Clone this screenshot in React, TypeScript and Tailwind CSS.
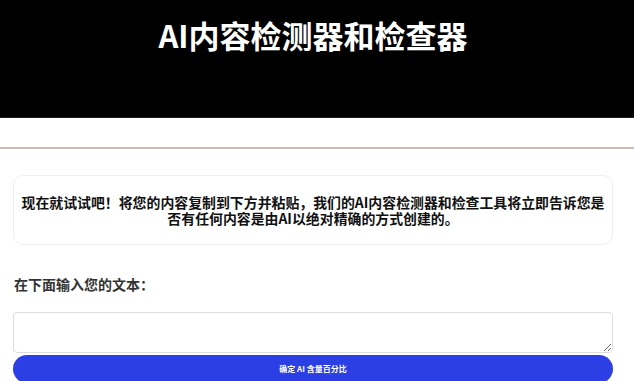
import React from "react";

export default function App() {
  return (
    <div
      className="w-[634px] h-[381px] overflow-hidden bg-white"
      style={{ fontFamily: '"Noto Sans CJK SC", "Noto Sans", sans-serif' }}
    >
      <header className="h-[118px] bg-black border-b border-[#222222] pt-[17px] pr-[8px]">
        <h1 className="text-center text-white font-bold text-[31px] leading-[36px]">
          AI内容检测器和检查器
        </h1>
      </header>
      <div className="h-[29px]" />
      <div className="h-[2px] bg-[#cbbcb6]" />
      <main className="pl-[13px] w-[613px]">
        <div className="mt-[26px] h-[70px] rounded-[10px] border border-[#efefef] px-[2px] flex items-center justify-center">
          <p className="text-center font-bold text-[#111111] text-[13.9px] leading-[16.5px]">
            现在就试试吧！将您的内容复制到下方并粘贴，我们的AI内容检测器和检查工具将立即告诉您是否有任何内容是由AI以绝对精确的方式创建的。
          </p>
        </div>
        <div className="mt-[29px] font-bold text-[#333333] text-[14px] leading-[20px] pl-[1px]">
          在下面输入您的文本：
        </div>
        <textarea className="mt-[18px] block w-full h-[41px] rounded-[4px] border border-[#dddddd] bg-white" />
        <button className="mt-[2px] w-full h-[28px] rounded-full bg-[#2b3fe4] text-white text-[8px] leading-[28px] font-bold">
          确定 AI 含量百分比
        </button>
      </main>
    </div>
  );
}
